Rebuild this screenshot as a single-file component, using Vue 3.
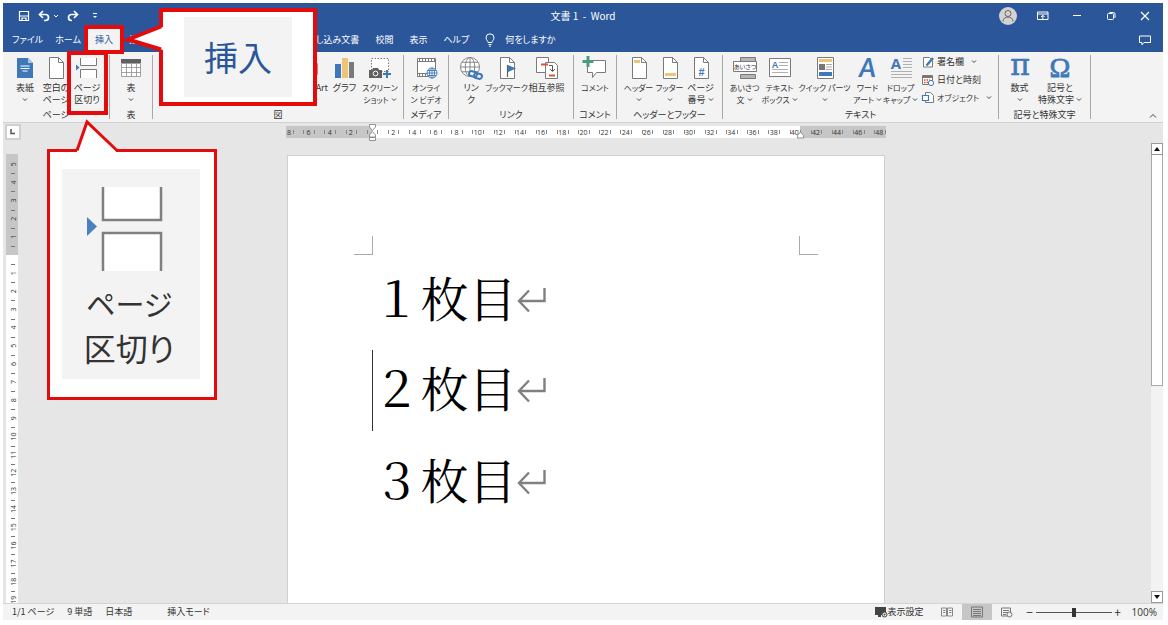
<script setup>
import { ref } from 'vue'

const tabs = ['ファイル', 'ホーム', '挿入', '描画', '差し込み文書', '校閲', '表示', 'ヘルプ']
const activeTab = ref('挿入')
const zoom = ref(50)

const B = '#3f78b8'
const G = '#7a7a7a'
const Y = '#eec477'
const page = `<path d="M5.5 1.5h9l5 5v16h-14z" fill="#fff" stroke="${G}"/><path d="M14.5 1.5v5h5" fill="none" stroke="${G}"/>`
const globe = (x, y, r) => `<g fill="#fff" stroke="${r > 6 ? G : B}" stroke-width=".9"><circle cx="${x}" cy="${y}" r="${r}"/><ellipse cx="${x}" cy="${y}" rx="${r / 2}" ry="${r}"/><path d="M${x} ${y - r}v${2 * r}M${x - r} ${y}h${2 * r}M${x - r * 0.85} ${y - r / 2}h${r * 1.7}M${x - r * 0.85} ${y + r / 2}h${r * 1.7}" fill="none"/></g>`

const icons = {
  cover: `<path d="M4 2h11l5 5v15H4z" fill="${B}"/><path d="M15 2v5h5" fill="#a9c6e6"/><path d="M7.500 10h9M7.500 12.500h9M9.500 15h5" stroke="#fff" stroke-width="1"/>`,
  blank: page,
  break: `<path d="M5.500 2v7.500h16V2M5.500 22v-8.500h16V22" fill="#fff" stroke="${G}"/><path d="M1 8.500l3.500 3L1 14.500z" fill="${B}"/>`,
  table: `<path d="M2 3h20v4H2z" fill="#606060"/><path d="M2.500 7.500h19v13h-19zM7.500 7v13M12.500 7v13M17.500 7v13M2 11.500h20M2 16.500h20" fill="#fff" stroke="#999" stroke-width=".9"/>`,
  smart: `<path d="M4.500 7.500h16v11h-16z" fill="#fff" stroke="#c98080"/>`,
  chart: `<path d="M2 8h6v14H2z" fill="${B}"/><path d="M9 2h6v20H9z" fill="${Y}"/><path d="M16 6h5v16h-5z" fill="${G}"/>`,
  shot: `<path d="M3.500 2.500h17v13h-17z" fill="#fff" stroke="${G}" stroke-dasharray="1.500 1.500"/><path d="M1 14h3l1-2h5l1 2h3v8H1z" fill="#606060"/><circle cx="7.500" cy="17.500" r="2.400" fill="#606060" stroke="#fff"/><path d="M19 14v8M15 18h8" stroke="${B}" stroke-width="2"/>`,
  video: `<path d="M3.500 2.500h18v18h-18z" fill="#fff" stroke="${G}"/><path d="M3.500 5.500h18M3.500 17.500h10" stroke="${G}"/><path d="M5 4h16M5 19h9" stroke="${G}" stroke-width="2" stroke-dasharray="1 2"/>${globe(18, 17, 5)}`,
  link: `${globe(11, 11, 9.5)}<g fill="#f3f3f3" stroke="${B}" stroke-width="2"><rect x="10" y="15.500" width="8" height="5" rx="2.500" transform="rotate(14 14 18)"/><rect x="15" y="17.500" width="8" height="5" rx="2.500" fill="none" transform="rotate(14 19 20)"/></g>`,
  bookmark: `${page}<path d="M12.500 9v12" stroke="#606060" stroke-width="1.200"/><path d="M13 9l8 3.500-8 3.500z" fill="${B}"/>`,
  cross: `<path d="M1.500 1.500h12v15h-12z" fill="#fff" stroke="${G}"/><path d="M10.500 6.500h9l3 3v13h-12z" fill="#fff" stroke="${G}"/><path d="M6 8.500h7M14 19.500h6" stroke="#d9563b" stroke-width="1.800"/><path d="M14 9.500h3.500V15M15 13l2.500 2.500L20 13" fill="none" stroke="#555"/>`,
  comment: `<path d="M4.500 4.500h18v12h-9l-4 5v-5h-5z" fill="#fff" stroke="${G}"/><path d="M5 0v11M-.5 5.500h11" stroke="#4c9b7d" stroke-width="3"/>`,
  header: `${page}<path d="M7 4h6v3H7z" fill="${Y}"/>`,
  footer: `${page}<path d="M7 17h11v3H7z" fill="${Y}"/>`,
  number: `${page}<text x="12.500" y="19.500" font-size="11" font-weight="700" text-anchor="middle" fill="${B}" font-family="Liberation Sans, sans-serif">#</text>`,
  greet: `<path d="M7.500 1.500h15v4h-15zM7.500 18.500h15v4h-15z" fill="#b5b5b5" stroke="${G}"/><path d="M.5 5.500h23v10H.5z" fill="#fff" stroke="${G}"/><text x="12" y="12.800" font-size="6" text-anchor="middle" fill="#333" font-family="Noto Sans CJK JP, sans-serif" style="font-feature-settings:'palt'">あいさつ</text>`,
  textbox: `<path d="M1.500 2.500h21v18h-21z" fill="#fff" stroke="${G}"/><text x="7" y="12" font-size="9" font-weight="700" text-anchor="middle" fill="${B}" font-family="Liberation Sans, sans-serif">A</text><path d="M11 6.500h9M11 9.500h9M4 13.500h16M4 16.500h16" stroke="#b0b0b0"/>`,
  quick: `<path d="M4.500 1.500h16v21h-16z" fill="#fff" stroke="${G}"/><path d="M6 3h13v3H6z" fill="${Y}"/><path d="M6 8h6v6H6z" fill="#777"/><path d="M13 8.500h6M13 11h6M13 13.500h6" stroke="#aaa"/><path d="M6 16h13v4H6z" fill="${B}"/>`,
  word: `<text x="11.500" y="21" font-size="26" font-weight="700" font-style="italic" text-anchor="middle" fill="${B}" font-family="Lato, sans-serif">A</text>`,
  drop: `<text x="7" y="12.500" font-size="15" font-weight="700" text-anchor="middle" fill="${B}" font-family="Open Sans, sans-serif">A</text><path d="M14 2.500h9M14 5.500h9M14 8.500h9M14 11.500h9M2 15.500h21M2 18.500h21M2 21.500h21" stroke="#b0b0b0"/>`,
  pi: `<text x="12" y="19" font-size="30" text-anchor="middle" fill="${B}" stroke="${B}" stroke-width=".6" font-family="DejaVu Serif, serif">π</text>`,
  omega: `<text x="12" y="21" font-size="28" text-anchor="middle" fill="${B}" stroke="${B}" stroke-width=".8" font-family="Liberation Serif, serif">Ω</text>`,
}

const smallIcons = {
  sign: `<path d="M1.500 1.500h6l3 3v6.500h-9z" fill="#fff" stroke="${G}"/><path d="M11 2L4.500 9.500" stroke="${B}" stroke-width="2.400"/>`,
  date: `<path d="M.5 1.500h10v9H.5z" fill="#fff" stroke="${G}"/><path d="M.5 2h10v2H.5z" fill="#777"/><path d="M2 6h6M2 8.500h4" stroke="#d9563b" stroke-width="1.500" stroke-dasharray="1.500 1"/><circle cx="9" cy="9" r="2.600" fill="#fff" stroke="${B}"/>`,
  object: `<path d="M3.500.5h5l3 3v7h-8z" fill="#fff" stroke="${G}"/><path d="M.5 3.500h6v5h-6z" fill="#fff" stroke="${B}" stroke-width="1.200"/>`,
}

const groups = [
  { name: 'ページ', items: [{ i: 'cover', l: ['表紙'], d: 1 }, { i: 'blank', l: ['空白の', 'ページ'] }, { i: 'break', l: ['ページ', '区切り'], mark: true }] },
  { name: '表', items: [{ i: 'table', l: ['表'], d: 1 }] },
  { name: '図', align: 'end', items: [{ i: 'smart', l: ['SmartArt'], w: 'mid' }, { i: 'chart', l: ['グラフ'] }, { i: 'shot', l: ['スクリーン', 'ショット'], d: 2, w: 'mid', small: true }] },
  { name: 'メディア', items: [{ i: 'video', l: ['オンライ', 'ン ビデオ'], w: 'mid', small: true }] },
  { name: 'リンク', items: [{ i: 'link', l: ['リン', 'ク'] }, { i: 'bookmark', l: ['ブックマーク'], w: 'mid', small: true }, { i: 'cross', l: ['相互参照'], w: 'mid' }] },
  { name: 'コメント', items: [{ i: 'comment', l: ['コメント'], w: 'mid', small: true }] },
  { name: 'ヘッダーとフッター', items: [{ i: 'header', l: ['ヘッダー'], d: 1, small: true }, { i: 'footer', l: ['フッター'], d: 1, small: true }, { i: 'number', l: ['ページ', '番号'], d: 2 }] },
  {
    name: 'テキスト',
    align: 'start',
    items: [{ i: 'greet', l: ['あいさつ', '文'], d: 2, w: 'text', small: true }, { i: 'textbox', l: ['テキスト', 'ボックス'], d: 2, w: 'text', small: true }, { i: 'quick', l: ['クイック パーツ'], d: 1, w: 'wide', small: true }, { i: 'word', l: ['ワード', 'アート'], d: 2, small: true }, { i: 'drop', l: ['ドロップ', 'キャップ'], d: 2, w: 'text', small: true }],
    side: [{ i: 'sign', l: '署名欄', d: 1 }, { i: 'date', l: '日付と時刻' }, { i: 'object', l: 'オブジェクト', d: 1, small: true }],
  },
  { name: '記号と特殊文字', items: [{ i: 'pi', l: ['数式'], d: 1 }, { i: 'omega', l: ['記号と', '特殊文字'], d: 2, w: 'symbol' }] },
]

const unit = 21.14
const origin = 86
const hNumbers = []
for (let n = -8; n <= 48; n += 2) if (n) hNumbers.push({ n: Math.abs(n), x: n === -8 ? 3 : origin + (n / 2) * unit })
const hTicks = []
for (let k = -7; k <= 49; k++) hTicks.push(origin + (k - 0.5) * (unit / 2))

const vUnit = 18.15
const vOrigin = 101
const vNumbers = []
for (let n = -5; n <= 19; n++) if (n) vNumbers.push({ n: Math.abs(n), y: vOrigin + n * vUnit })
const vTicks = []
for (let n = -5; n <= 18; n++) vTicks.push(Math.round(vOrigin + (n + 0.5) * vUnit))

const lines = ['１枚目', '２枚目', '３枚目']
</script>

<template>
  <div class="screen">
    <div class="window">
      <header class="titlebar">
        <div class="quick">
          <button aria-label="上書き保存"><svg width="12" height="12" viewBox="0 0 12 12"><path d="M1.500 1.500h9v9h-9z" fill="none" stroke="#fff" stroke-width="1.200" /><path d="M2 6h8M4 10V8h4v2.500" fill="none" stroke="#fff" stroke-width="1.200" /></svg></button>
          <button class="undo" aria-label="元に戻す"><svg width="12" height="12" viewBox="0 0 12 12"><path d="M1.500 4.500h6a3 3 0 0 1 0 6H6M5 1L1.500 4.500 5 8" fill="none" stroke="#fff" stroke-width="1.700" /></svg><svg width="6" height="4" viewBox="0 0 6 4"><path d="M1 1l2 2 2-2" fill="none" stroke="#fff" /></svg></button>
          <button aria-label="やり直し"><svg width="12" height="12" viewBox="0 0 12 12"><path d="M10.500 4.500h-6a3 3 0 0 0 0 6H5M7 1l3.500 3.500L7 8" fill="none" stroke="#fff" stroke-width="1.700" /></svg></button>
          <button class="more" aria-label="カスタマイズ"><svg width="6" height="6" viewBox="0 0 6 6"><path d="M1 .5h4" stroke="#fff" /><path d="M1 3h4L3 5z" fill="#fff" /></svg></button>
        </div>
        <h1>文書 1&nbsp; -&nbsp; Word</h1>
        <div class="controls">
          <button class="avatar" aria-label="アカウント"><svg width="18" height="18" viewBox="0 0 18 18"><circle cx="9" cy="9" r="9" fill="#d4d2d0" /><circle cx="9" cy="6.500" r="3" fill="none" stroke="#666" /><path d="M4 14.500c0-6 10-6 10 0" fill="none" stroke="#666" /></svg></button>
          <button aria-label="リボンの表示"><svg width="12" height="10" viewBox="0 0 12 10"><path d="M.5 1h10.500v7.500H.5zM.5 3h10.500M5.800 8V4.500M4 6l1.800-1.800L7.600 6" fill="none" stroke="#fff" /></svg></button>
          <button aria-label="最小化"><svg width="10" height="10" viewBox="0 0 10 10"><path d="M1 4.500h8" stroke="#fff" /></svg></button>
          <button aria-label="元のサイズ"><svg width="10" height="10" viewBox="0 0 10 10"><rect x="1.500" y="2.500" width="6" height="6" rx="1" fill="none" stroke="#fff" /><path d="M3.500 1.500h4a1.500 1.500 0 0 1 1.500 1.500v4" fill="none" stroke="#fff" /></svg></button>
          <button aria-label="閉じる"><svg width="10" height="10" viewBox="0 0 10 10"><path d="M1 1l8 8M9 1l-8 8" stroke="#fff" stroke-width="1.200" /></svg></button>
        </div>
      </header>

      <nav class="tabs">
        <button v-for="(t, n) in tabs" :key="t" :class="{ active: t === activeTab, near: n < 2, far: n === 4 }" @click="activeTab = t">{{ t }}</button>
        <button class="tell"><svg width="10" height="14" viewBox="0 0 10 14"><path d="M3 9.500C3 8 1 7 1 4.800a4 4 0 0 1 8 0C9 7 7 8 7 9.500zM3.500 11.500h3M4 13.200h2" fill="none" stroke="#fff" /></svg>何をしますか</button>
        <button class="notes" aria-label="コメント"><svg width="12" height="11" viewBox="0 0 12 11"><path d="M.5 1h11v6.500H5L3 9.800V7.500H.5z" fill="none" stroke="#fff" /></svg></button>
      </nav>

      <section class="ribbon">
        <div v-for="g in groups" :key="g.name" class="group">
          <div class="items" :class="g.align">
            <button v-for="it in g.items" :key="it.i" class="item" :class="[it.w, { marked: it.mark, small: it.small }]">
              <svg width="24" height="24" viewBox="0 0 24 24" v-html="icons[it.i]"></svg>
              <span v-for="(l, n) in it.l" :key="l" class="line">{{ l }}<svg v-if="it.d === 2 && n === 1" width="6" height="4" viewBox="0 0 6 4"><path d="M1 .5l2 2 2-2" fill="none" stroke="#444" /></svg></span>
              <span v-if="it.d === 1" class="line"><svg width="6" height="4" viewBox="0 0 6 4"><path d="M1 .5l2 2 2-2" fill="none" stroke="#444" /></svg></span>
            </button>
            <div v-if="g.side" class="side">
              <button v-for="s in g.side" :key="s.i" :class="{ small: s.small }"><svg width="12" height="12" viewBox="0 0 12 12" v-html="smallIcons[s.i]"></svg>{{ s.l }}<svg v-if="s.d" class="gap" width="6" height="4" viewBox="0 0 6 4"><path d="M1 .5l2 2 2-2" fill="none" stroke="#444" /></svg></button>
            </div>
          </div>
          <div class="name">{{ g.name }}</div>
        </div>
        <button class="collapse" aria-label="リボンを折りたたむ"><svg width="8" height="6" viewBox="0 0 8 6"><path d="M1 4.500l3-3 3 3" fill="none" stroke="#444" /></svg></button>
      </section>

      <main class="work">
        <div class="left">
          <button class="corner" aria-label="タブの種類"><svg width="6" height="6" viewBox="0 0 6 6"><path d="M1 0v4.500h4" fill="none" stroke="#555" stroke-width="1.500" /></svg></button>
          <div class="vruler">
            <svg width="12" height="449" viewBox="0 0 12 449">
              <path d="M0 0h12v449H0z" fill="#fff" />
              <path d="M0 0h12v101H0z" fill="#c6c6c6" />
              <path v-for="y in vTicks" :key="y" :d="`M5 ${y + 0.5}h4`" stroke="#777" />
              <text v-for="v in vNumbers" :key="v.y" :transform="`translate(9.500 ${v.y}) rotate(-90)`">{{ v.n }}</text>
            </svg>
          </div>
        </div>
        <div class="canvas">
          <svg class="hruler" width="600" height="18" viewBox="0 0 600 18">
            <path d="M0 3h600v12H0z" fill="#c6c6c6" />
            <path d="M86 3h428v12H86z" fill="#fff" />
            <path v-for="x in hTicks" :key="x" :d="`M${Math.round(x) + 0.5} 7v4`" stroke="#888" />
            <text v-for="h in hNumbers" :key="h.x" :x="h.x" y="12">{{ h.n }}</text>
            <path d="M83.500 1.500h6v2.500l-3 3.500-3-3.500zM83.500 14v-2l3-3.500 3 3.500v2zM83.500 14.500h6v3h-6z" fill="#fff" stroke="#888" stroke-width=".9" />
            <path d="M511.500 15v-2.500l3-3.500 3 3.500V15z" fill="#fff" stroke="#888" stroke-width=".9" />
          </svg>
          <article class="page">
            <div class="margins"><i></i><i></i></div>
            <p v-for="(l, n) in lines" :key="l" :class="{ caret: n === 1 }">{{ l }}<svg width="30" height="28" viewBox="0 0 30 28"><path d="M27.500 1v13H2.500M12 3.500L2 14l10 10.500" fill="none" stroke="#808080" stroke-width="2.400" /></svg></p>
          </article>
        </div>
        <div class="scroll">
          <button aria-label="上へ"><svg width="6" height="4" viewBox="0 0 6 4"><path d="M0 4h6L3 0z" fill="#111" /></svg></button>
          <div class="track"><div class="thumb"></div></div>
          <button aria-label="下へ"><svg width="6" height="4" viewBox="0 0 6 4"><path d="M0 0h6L3 4z" fill="#111" /></svg></button>
        </div>
      </main>

      <footer class="status">
        <span>1/1 ページ</span><span>9 単語</span><span>日本語</span><span class="mode">挿入モード</span>
        <button class="display"><svg width="13" height="12" viewBox="0 0 13 12"><path d="M0 1h11v8H0zM3 9h3v2H3z" fill="#444" /><circle cx="9.500" cy="8.500" r="2.500" fill="#f3f3f3" stroke="#444" /><circle cx="9.500" cy="8.500" r="1" fill="#444" /></svg>表示設定</button>
        <button class="view" aria-label="閲覧モード"><svg width="12" height="10" viewBox="0 0 12 10"><path d="M.5 1h5v8h-5zM6.500 1h5v8h-5zM2 3.500h2.500M2 5.500h2.500M8 3.500h2.500M8 5.500h2.500" fill="none" stroke="#888" /></svg></button>
        <button class="view on" aria-label="印刷レイアウト"><svg width="12" height="12" viewBox="0 0 12 12"><path d="M.5 1h11v10H.5zM2 3.500h8M2 5.500h8M2 7.500h8M2 9.500h8" fill="none" stroke="#777" /></svg></button>
        <button class="view" aria-label="Web レイアウト"><svg width="12" height="11" viewBox="0 0 12 11"><path d="M.5 1h9v8h-9zM2 3.500h6M2 5.500h6M2 7.500h3" fill="none" stroke="#777" /><circle cx="8.500" cy="7.500" r="2.500" fill="#eee" stroke="#777" /></svg></button>
        <button class="step" aria-label="縮小">−</button>
        <input v-model="zoom" type="range" min="0" max="100" aria-label="ズーム" />
        <button class="step" aria-label="拡大">+</button>
        <span class="percent">100%</span>
      </footer>
    </div>

    <div class="callout insert">
      <svg class="tail" width="40" height="32" viewBox="0 0 40 32"><path d="M40 5L5 17.500 40 28z" fill="#fff" /><path d="M38 4.500L5 17.500 38 27.500" fill="none" stroke="#e30b0b" stroke-width="4" /></svg>
      <div class="panel">挿入</div>
    </div>
    <div class="callout break">
      <svg class="tail" width="48" height="34" viewBox="0 0 48 34"><path d="M3 34V31L13 4l29 27v3z" fill="#fff" /><path d="M3 32.500L13 4l30 28.500" fill="none" stroke="#e30b0b" stroke-width="3" /></svg>
      <div class="panel">
        <svg width="76" height="84" viewBox="0 0 76 84"><path d="M16 0v33h58V0M16 84V46h58v38" fill="#fff" stroke="#808080" stroke-width="2.500" /><path d="M0 30l10 9.500L0 49z" fill="#4a80bd" /></svg>
        <span class="kana">ページ</span><span>区切り</span>
      </div>
    </div>
  </div>
</template>

<style>
body {
  background: #fff;
}
</style>

<style scoped>
* {
  box-sizing: border-box;
}
.screen {
  position: relative;
  height: 100vh;
  padding: 3px 5px 5px 3px;
  overflow: hidden;
  font: 9px/12px "Noto Sans CJK JP", sans-serif;
  font-feature-settings: "palt";
  color: #333;
}
.window {
  height: 100%;
  display: flex;
  flex-direction: column;
}
button {
  border: 0;
  padding: 0;
  background: none;
  font: inherit;
  font-feature-settings: inherit;
  color: inherit;
  white-space: nowrap;
}
svg {
  display: block;
  flex: none;
  overflow: visible;
}
.titlebar {
  display: grid;
  grid-template-columns: 1fr auto 1fr;
  align-items: center;
  height: 25px;
  background: #2b579a;
  color: #fff;
}
.titlebar h1 {
  margin: 0;
  font: inherit;
  font-size: 10px;
}
.quick {
  display: flex;
  align-items: center;
  gap: 8px;
  padding-left: 15px;
}
.undo {
  display: flex;
  align-items: center;
  gap: 3px;
}
.more {
  margin-left: 5px;
}
.controls {
  display: flex;
  justify-content: flex-end;
  padding-right: 1px;
}
.controls button {
  width: 34px;
  height: 24px;
  display: grid;
  place-items: center;
}
.controls .avatar {
  width: 36px;
}
.tabs {
  display: flex;
  height: 24px;
  padding-left: 3px;
  background: #2b579a;
  color: #fff;
}
.tabs button {
  padding: 0 8px;
}
.tabs .near {
  padding: 0 6px;
}
.tabs .far {
  margin-left: 144px;
}
.tabs .active {
  position: relative;
  background: #f3f3f3;
  color: #2b579a;
}
.tabs .active::after {
  content: "";
  position: absolute;
  inset: -3px -3px -2px;
  border: 4px solid #e30b0b;
  z-index: 2;
}
.tabs .tell {
  display: flex;
  align-items: center;
  gap: 10px;
  padding-left: 8px;
}
.tabs .notes {
  margin-left: auto;
  padding-right: 12px;
}
.ribbon {
  display: grid;
  grid-template-columns: 107px 43px 251px 45px 125px 43px 106px 276px 92px 1fr;
  height: 70px;
  padding: 3px 0;
  background: #f3f3f3;
}
.group {
  display: flex;
  flex-direction: column;
  justify-content: space-between;
  border-right: 1px solid #a8a8a8;
  min-width: 0;
}
.items {
  display: flex;
  justify-content: center;
  align-items: flex-start;
}
.items.end {
  justify-content: flex-end;
  padding-right: 3px;
}
.items.start {
  justify-content: flex-start;
  padding-left: 4px;
}
.item {
  width: 31px;
  display: flex;
  flex-direction: column;
  align-items: center;
  padding-top: 1px;
}
.item.mid {
  width: 40px;
}
.item.text {
  width: 35px;
}
.item.wide {
  width: 55px;
}
.item.symbol {
  width: 50px;
}
.small {
  font-size: 8px;
}
.item svg {
  margin-bottom: 2px;
}
.item.marked {
  position: relative;
}
.item.marked::after {
  content: "";
  position: absolute;
  inset: -4px -5px -9px;
  border: 4px solid #e30b0b;
}
.line {
  display: flex;
  align-items: center;
  justify-content: center;
  gap: 2px;
  height: 12px;
}
.item .line svg {
  margin: 0;
}
.name {
  text-align: center;
  white-space: nowrap;
  line-height: 8px;
}
.side {
  display: flex;
  flex-direction: column;
  gap: 6px;
  padding: 1px 0 0 4px;
}
.side button {
  display: flex;
  align-items: center;
  gap: 3px;
  height: 12px;
}
.side .gap {
  margin-left: 4px;
}
.collapse {
  align-self: end;
  justify-self: end;
  padding-right: 6px;
}
.work {
  flex: 1;
  min-height: 0;
  display: flex;
  background: #e6e6e6;
  border-top: 1px solid #d2d2d2;
  overflow: hidden;
}
.left {
  width: 17px;
  display: flex;
  flex-direction: column;
  gap: 14px;
  padding: 1px 0 0 2px;
}
.corner {
  flex: none;
  display: grid;
  place-items: center;
  width: 16px;
  height: 16px;
  background: #fdfdfd;
  border: 2px solid #d0d0d0;
}
.vruler {
  flex: 1;
  min-height: 0;
  overflow: hidden;
  padding-left: 1px;
}
.vruler text,
.hruler text {
  font: 7px "Open Sans", sans-serif;
  fill: #333;
  text-anchor: middle;
}
.canvas {
  flex: 1;
  min-width: 0;
  display: flex;
  flex-direction: column;
  align-items: center;
  gap: 14px;
}
.page {
  flex: 1;
  width: 598px;
  background: #fff;
  border: 1px solid #d0d0d0;
  border-bottom: 0;
  padding: 80px 66px 0;
}
.margins {
  display: flex;
  justify-content: space-between;
}
.margins i {
  width: 19px;
  height: 19px;
  border: 1px solid #aaa;
  border-width: 0 1px 1px 0;
}
.margins i + i {
  border-width: 0 0 1px 1px;
}
.page p {
  display: flex;
  align-items: center;
  height: 91px;
  margin: 0 0 0 19px;
  font: 400 48px/90px "Liberation Serif", "Noto Serif CJK JP", "Noto Serif JP", "Noto Sans CJK JP", serif;
  font-feature-settings: normal;
  color: #000;
}
.page .caret {
  box-shadow: -1px 0 #333;
  height: 81px;
  margin-top: 4px;
  margin-bottom: 6px;
}
.scroll {
  width: 12px;
  display: flex;
  flex-direction: column;
  padding-top: 20px;
}
.scroll button {
  display: grid;
  place-items: center;
  height: 12px;
  background: #fff;
  border: 1px solid #999;
}
.track {
  flex: 1;
  background: #f2f2f2;
}
.thumb {
  height: 53%;
  background: #fff;
  border: 1px solid #aaa;
  border-top: 0;
}
.status {
  flex: none;
  display: flex;
  align-items: center;
  height: 17px;
  padding: 0 6px 0 9px;
  background: #f3f3f3;
  border-top: 1px solid #d4d4d4;
}
.status span {
  margin-right: 13px;
  white-space: nowrap;
}
.status .mode {
  margin-left: 22px;
}
.status .display {
  display: flex;
  align-items: center;
  margin-left: auto;
  margin-right: 8px;
}
.view {
  display: grid;
  place-items: center;
  width: 30px;
  height: 16px;
}
.view.on {
  background: #c6c6c6;
}
.step {
  width: 12px;
  font-size: 12px;
}
.view + .step {
  margin-left: 2px;
}
.status .percent {
  margin: 0 0 0 8px;
  font: 10px/12px "Open Sans", sans-serif;
}
input[type="range"] {
  appearance: none;
  width: 76px;
  height: 10px;
  margin: 0;
  background: linear-gradient(#555, #555) center / 100% 1px no-repeat;
}
input[type="range"]::-webkit-slider-thumb {
  appearance: none;
  width: 4px;
  height: 9px;
  background: #333;
}
.callout {
  position: absolute;
  background: #fff;
  z-index: 3;
}
.callout .tail {
  position: absolute;
}
.callout .panel {
  background: #f3f3f3;
}
.insert {
  left: 159px;
  top: 8px;
  border: 4px solid #e30b0b;
  padding: 5px 21px;
}
.insert .tail {
  right: 100%;
  top: 10px;
}
.insert .panel {
  display: grid;
  place-items: center;
  width: 108px;
  height: 80px;
  font-size: 34px;
  line-height: 40px;
  color: #2b579a;
}
.break {
  left: 47px;
  top: 149px;
  border: 3px solid #e30b0b;
  padding: 17px 14px 18px 12px;
}
.break .tail {
  left: 24px;
  bottom: 100%;
}
.break .panel {
  display: flex;
  flex-direction: column;
  align-items: center;
  width: 138px;
  height: 210px;
  padding: 18px 4px 0 0;
  font-size: 32px;
  line-height: 44px;
}
.break .panel svg {
  margin: 0 8px 10px 0;
}
.break .kana {
  font-size: 29px;
}
</style>
